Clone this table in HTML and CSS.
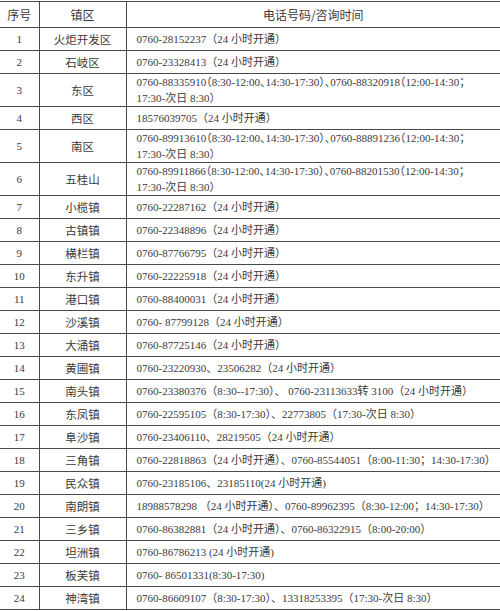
FILE: index.html
```html
<!DOCTYPE html>
<html lang="zh-CN">
<head>
<meta charset="utf-8">
<title>咨询电话</title>
<link rel="stylesheet" href="styles.css">
</head>
<body>
<table class="grid">
  <colgroup>
    <col class="c-no">
    <col class="c-town">
    <col class="c-tel">
  </colgroup>
  <thead>
    <tr class="head">
      <th>序号</th>
      <th>镇区</th>
      <th>电话号码/咨询时间</th>
    </tr>
  </thead>
  <tbody>
    <tr><td>1</td><td>火炬开发区</td><td>0760-28152237（24 小时开通）</td></tr>
    <tr><td>2</td><td>石岐区</td><td>0760-23328413（24 小时开通）</td></tr>
    <tr class="two"><td>3</td><td>东区</td><td><span class="hw">0760-88335910（8:30-12:00、14:30-17:30）、0760-88320918（12:00-14:30；</span><br>17:30-次日 8:30）</td></tr>
    <tr><td>4</td><td>西区</td><td>18576039705（24 小时开通）</td></tr>
    <tr class="two"><td>5</td><td>南区</td><td><span class="hw">0760-89913610（8:30-12:00、14:30-17:30）、0760-88891236（12:00-14:30；</span><br>17:30-次日 8:30）</td></tr>
    <tr class="two"><td>6</td><td>五桂山</td><td><span class="hw">0760-89911866（8:30-12:00、14:30-17:30）、0760-88201530（12:00-14:30；</span><br>17:30-次日 8:30）</td></tr>
    <tr><td>7</td><td>小榄镇</td><td>0760-22287162（24 小时开通）</td></tr>
    <tr><td>8</td><td>古镇镇</td><td>0760-22348896（24 小时开通）</td></tr>
    <tr><td>9</td><td>横栏镇</td><td>0760-87766795（24 小时开通）</td></tr>
    <tr><td>10</td><td>东升镇</td><td>0760-22225918（24 小时开通）</td></tr>
    <tr><td>11</td><td>港口镇</td><td>0760-88400031（24 小时开通）</td></tr>
    <tr><td>12</td><td>沙溪镇</td><td>0760- 87799128（24 小时开通）</td></tr>
    <tr><td>13</td><td>大涌镇</td><td>0760-87725146（24 小时开通）</td></tr>
    <tr><td>14</td><td>黄圃镇</td><td>0760-23220930、23506282（24 小时开通）</td></tr>
    <tr><td>15</td><td>南头镇</td><td>0760-23380376（8:30--17:30）、 0760-23113633转 3100（24 小时开通）</td></tr>
    <tr><td>16</td><td>东凤镇</td><td>0760-22595105（8:30-17:30）、22773805（17:30-次日 8:30）</td></tr>
    <tr><td>17</td><td>阜沙镇</td><td>0760-23406110、28219505（24 小时开通）</td></tr>
    <tr><td>18</td><td>三角镇</td><td>0760-22818863（24 小时开通）、0760-85544051（8:00-11:30；14:30-17:30）</td></tr>
    <tr><td>19</td><td>民众镇</td><td>0760-23185106、23185110(24 小时开通)</td></tr>
    <tr><td>20</td><td>南朗镇</td><td>18988578298 （24 小时开通）、0760-89962395（8:30-12:00；14:30-17:30）</td></tr>
    <tr><td>21</td><td>三乡镇</td><td>0760-86382881（24 小时开通）、0760-86322915（8:00-20:00）</td></tr>
    <tr><td>22</td><td>坦洲镇</td><td>0760-86786213 (24 小时开通)</td></tr>
    <tr><td>23</td><td>板芙镇</td><td>0760- 86501331(8:30-17:30)</td></tr>
    <tr><td>24</td><td>神湾镇</td><td>0760-86609107（8:30-17:30）、13318253395（17:30-次日 8:30）</td></tr>
  </tbody>
</table>
</body>
</html>
```
FILE: styles.css
```css
html, body {
  margin: 0;
  padding: 0;
  background: #ffffff;
  overflow: hidden;
}

body {
  width: 500px;
  height: 611px;
  padding-top: 1px;
  box-sizing: border-box;
}

.grid {
  border-collapse: collapse;
  table-layout: fixed;
  width: 500px;
  font-family: "Liberation Serif", "Noto Sans CJK SC", serif;
  font-size: 11px;
  color: #3a3a3a;
  border-top: 1px solid #4a4a4a;
}

.c-no { width: 39px; }
.c-town { width: 87px; }
.c-tel { width: 374px; }

.grid th,
.grid td {
  padding: 0;
  line-height: 16px;
  height: 22px;
  vertical-align: middle;
  text-align: center;
  white-space: nowrap;
  border-bottom: 1px solid #4a4a4a;
  border-left: 1px solid #4a4a4a;
  font-weight: normal;
}

.grid th:first-child,
.grid td:first-child {
  border-left: none;
}

.grid td:last-child {
  text-align: left;
  padding-left: 10px;
}

.grid tr.head th {
  height: 25px;
  font-family: "Noto Sans CJK SC", sans-serif;
  font-size: 12px;
}

.grid td:nth-child(2) {
  font-family: "Noto Sans CJK SC", sans-serif;
  font-size: 11.5px;
}

.grid tr.two td {
  height: 32px;
}

.hw {
  font-feature-settings: "halt" 1;
}
```
